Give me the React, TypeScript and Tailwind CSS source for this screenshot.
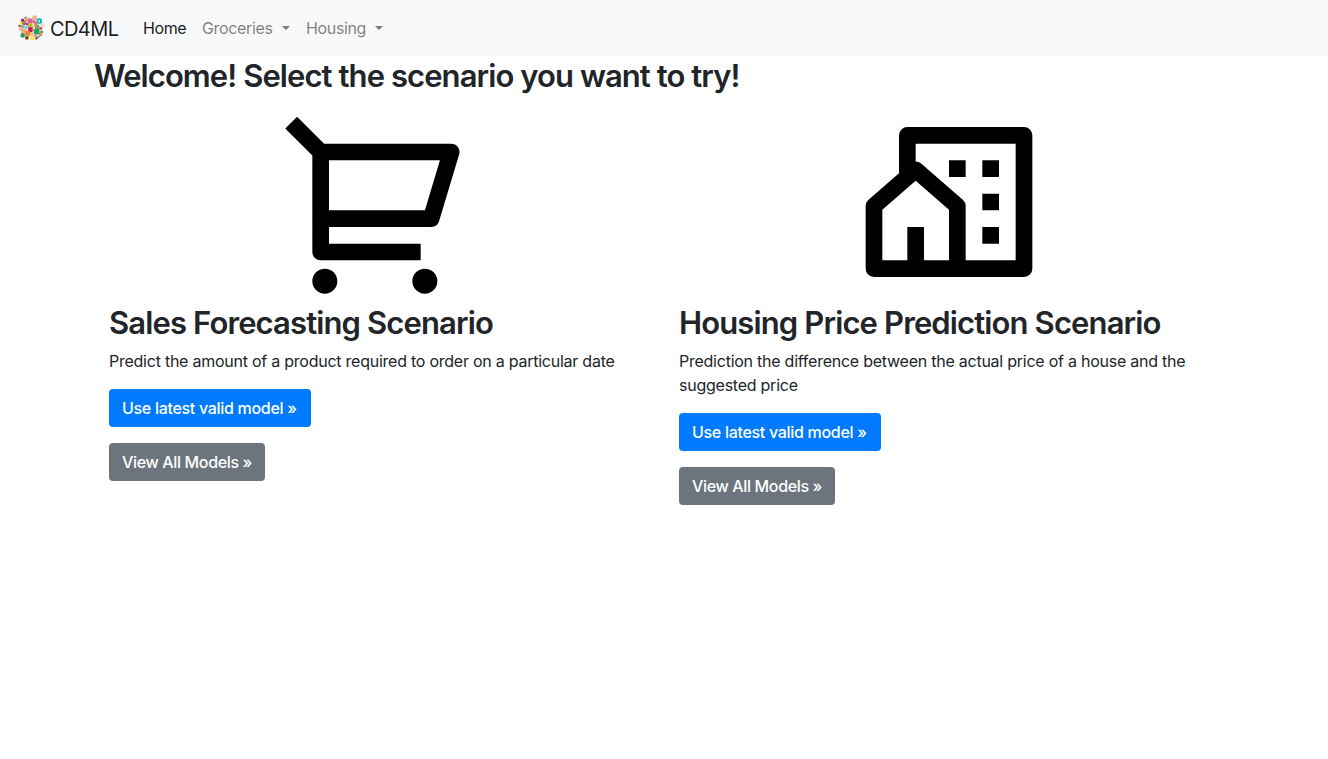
const LOGO_DOTS: [number, number, number, string][] = [
  [8, 4, 1.2, "#7fb08a"], [11, 4, 1.2, "#f4d9c8"], [17, 4, 2.2, "#eeb08c"], [22, 4.5, 1, "#f7dccb"],
  [5, 6.5, 1.6, "#b5174f"], [9, 6.5, 1.2, "#d9a520"], [12.5, 7, 2.4, "#ea5aa0"], [16.5, 8, 1.3, "#e14b8d"],
  [3.5, 9, 1.3, "#f5e14a"], [6.5, 9, 2, "#9c7560"], [21.5, 7.2, 2.6, "#10b4c4"], [18, 10, 1.6, "#ef7a35"],
  [9.5, 10.3, 1.2, "#a63a78"], [2, 12.2, 1.2, "#e2392f"], [5.2, 12.5, 1.8, "#7cb9a8"], [12.5, 11.8, 2.3, "#b6b92f"],
  [16, 12.5, 1.4, "#f3c5a8"], [19.5, 13, 2.1, "#6fa86b"], [24.5, 11.5, 1.8, "#f8d6c5"], [23, 14.5, 1.4, "#e94e36"],
  [8.8, 13.7, 1.2, "#58b8c9"], [3, 15.5, 1.6, "#f2b795"], [6, 17, 2.3, "#eda77f"], [12.8, 15.8, 2.3, "#c2185b"],
  [16, 16, 1.2, "#f0a040"], [19, 17.7, 2.7, "#0ba765"], [24, 18, 1.4, "#a28c3a"], [10, 19.5, 2.5, "#f08235"],
  [14.5, 20, 1.6, "#f1b28e"], [22.8, 20.8, 1.5, "#f27d3c"], [5, 21.5, 2, "#27995b"], [18, 21.8, 1.5, "#b898c8"],
  [14.5, 23.8, 2.3, "#fbe34d"], [9.2, 24, 1.6, "#75362f"], [18.8, 24.5, 1.1, "#8a2f60"], [20.8, 23.2, 1.1, "#62a884"],
];

function Logo() {
  return (
    <svg width="30" height="30" viewBox="0 0 30 30" className="block">
      <g transform="translate(1.2 1.9)">
        {LOGO_DOTS.map(([x, y, r, fill], i) => (
          <rect key={i} x={x - r + 0.4} y={y - r - 1.1} width={r * 2.1} height={r * 2.1} rx={r * 0.6} fill={fill} />
        ))}
        <circle cx="22" cy="6.4" r="1" fill="#fff" />
      </g>
    </svg>
  );
}

function Caret() {
  return <span className="ml-[9px] h-0 w-0 border-x-[4.8px] border-t-[4.8px] border-x-transparent border-t-current" />;
}

const CART =
  "M4 6.414L.757 3.172l1.415-1.415L5.414 5h15.242a1 1 0 0 1 .958 1.287l-2.4 8a1 1 0 0 1-.958.713H6v2h11v2H5a1 1 0 0 1-1-1V6.414zM6 7v6h11.512l1.8-6H6zm-.5 16a1.5 1.5 0 1 1 0-3 1.5 1.5 0 0 1 0 3zm12 0a1.5 1.5 0 1 1 0-3 1.5 1.5 0 0 1 0 3z";
const COMMUNITY =
  "M21 21H3a1 1 0 0 1-1-1v-7.513a1 1 0 0 1 .343-.754L6 8.544V4a1 1 0 0 1 1-1h14a1 1 0 0 1 1 1v16a1 1 0 0 1-1 1zM9 19h3v-6.058L8 9.454l-4 3.488V19h3v-4h2v4zm5 0h6V5H8v2.127c.234 0 .469.082.657.247l5 4.359a1 1 0 0 1 .343.754V19zm2-8h2v2h-2v-2zm0 4h2v2h-2v-2zm0-8h2v2h-2V7zm-4 0h2v2h-2V7z";

function Scenario({ icon, title, text }: { icon: string; title: string; text: string }) {
  return (
    <section className="w-[570px] px-[15px]">
      <svg className="mx-auto block h-[200px] w-[200px]" viewBox="0 0 24 24" fill="#000">
        <path d={icon} />
      </svg>
      <h2 className="mb-1.5 pt-0.5 text-[31px] leading-[38.4px] font-semibold tracking-[-0.87px] whitespace-nowrap">{title}</h2>
      <p className="mb-4 text-base leading-6 tracking-[-0.245px]">{text}</p>
      <p className="mb-4 flex">
        <a className="flex h-[38px] w-[202px] items-center rounded bg-[#007bff] px-[13px] text-base font-medium tracking-[-0.3px] whitespace-nowrap text-white">
          Use latest valid model »
        </a>
      </p>
      <p className="mb-4 flex">
        <a className="flex h-[38px] w-[156px] items-center rounded bg-[#6c757d] px-[13px] text-base font-medium tracking-[-0.35px] whitespace-nowrap text-white">
          View All Models »
        </a>
      </p>
    </section>
  );
}

export default function App() {
  return (
    <div className="min-h-screen bg-white font-['Inter',sans-serif] text-[#212529]">
      <nav className="flex h-14 items-center bg-[#f8f9fa] px-4">
        <a className="flex w-[119px] items-center text-xl tracking-[-0.6px] text-black/90">
          <Logo />
          <span className="ml-1 pt-px">CD4ML</span>
        </a>
        <a className="w-[59px] px-2 tracking-[-0.4px] text-black/90">Home</a>
        <a className="flex w-[104px] items-center px-2 tracking-[-0.35px] text-black/50">
          Groceries
          <Caret />
        </a>
        <a className="flex items-center px-2 tracking-[-0.35px] text-black/50">
          Housing
          <Caret />
        </a>
      </nav>
      <main className="mx-auto w-[1140px]">
        <h2 className="mb-[7px] pt-px text-[31px] leading-[38.4px] font-semibold tracking-[-0.92px]">
          Welcome! Select the scenario you want to try!
        </h2>
        <div className="flex">
          <Scenario
            icon={CART}
            title="Sales Forecasting Scenario"
            text="Predict the amount of a product required to order on a particular date"
          />
          <Scenario
            icon={COMMUNITY}
            title="Housing Price Prediction Scenario"
            text="Prediction the difference between the actual price of a house and the suggested price"
          />
        </div>
      </main>
    </div>
  );
}
